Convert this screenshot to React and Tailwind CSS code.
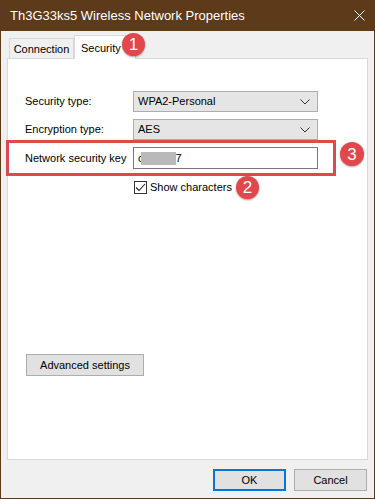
import React from "react";

const font = { fontFamily: '"Liberation Sans", Arial, sans-serif' };

function Chevron() {
  return (
    <svg width="10" height="6" viewBox="0 0 10 6" className="shrink-0">
      <path d="M0.5 0.5 L5 5 L9.5 0.5" fill="none" stroke="#333" strokeWidth="1" />
    </svg>
  );
}

function Select({ value }) {
  return (
    <div className="flex h-[21px] w-[185px] items-center justify-between border border-[#adadad] bg-[#e5e5e5] pl-[4px] pr-[7px] text-black">
      <span>{value}</span>
      <Chevron />
    </div>
  );
}

function Badge({ n, className }) {
  return (
    <div
      className={
        "absolute z-20 flex items-center justify-center rounded-full bg-[#e2474b] text-white text-[17px] leading-none shadow-[0_1px_2px_rgba(0,0,0,0.35)] " +
        className
      }
      style={font}
    >
      {n}
    </div>
  );
}

export default function App() {
  return (
    <div
      className="relative flex h-[499px] w-[375px] flex-col overflow-hidden whitespace-nowrap border-x border-b border-[#5c3a1a] bg-[#f0f0f0] text-[11px]"
      style={font}
    >
      {/* Title bar */}
      <div className="flex h-[31px] shrink-0 items-center justify-between bg-[#5c3a1a] pl-[9px] pr-[9px]">
        <span className="text-[13px] text-white">Th3G33ks5 Wireless Network Properties</span>
        <svg width="11" height="11" viewBox="0 0 11 11">
          <path d="M0.5 0.5 L10.5 10.5 M10.5 0.5 L0.5 10.5" stroke="#fff" strokeWidth="1" />
        </svg>
      </div>

      {/* Tabs */}
      <div className="flex h-[27px] shrink-0 items-end pl-[8px] text-black">
        <div className="flex h-[20px] w-[65px] items-center justify-center border border-b-0 border-[#d9d9d9] bg-[#f0f0f0] pt-[2px]">
          Connection
        </div>
        <div className="relative z-10 mb-[-1px] flex h-[24px] items-start border border-b-0 border-[#d9d9d9] bg-white pl-[6px] pr-[14px] pt-[4px]">
          Security
        </div>
      </div>

      {/* Panel */}
      <div className="mx-[6px] flex h-[402px] shrink-0 flex-col border border-[#d9d9d9] bg-white pl-[17px] text-black">
        <div className="mt-[32px] flex items-center">
          <span className="w-[108px]">Security type:</span>
          <Select value="WPA2-Personal" />
        </div>
        <div className="mt-[7px] flex items-center">
          <span className="w-[108px]">Encryption type:</span>
          <Select value="AES" />
        </div>
        <div className="mt-[7px] flex items-center">
          <span className="w-[108px]">Network security key</span>
          <div className="flex h-[22px] w-[185px] items-center border border-[#7a7a7a] bg-white pl-[4px]">
            <span>c</span>
            <span className="ml-[-3px] inline-block h-[13px] w-[35px] bg-[#b9b9b9]" />
            <span>7</span>
          </div>
        </div>
        <div className="ml-[109px] mt-[12px] flex items-center gap-[3px]">
          <div className="flex h-[13px] w-[13px] items-center justify-center border border-[#333] bg-white">
            <svg width="11" height="9" viewBox="0 0 11 9">
              <path d="M1 4.5 L4 7.5 L10 1" fill="none" stroke="#222" strokeWidth="1.1" />
            </svg>
          </div>
          <span className="leading-none">Show characters</span>
        </div>
        <div className="ml-[1px] mt-[160px] flex h-[22px] w-[118px] items-center justify-center border border-[#adadad] bg-[#e1e1e1]">
          Advanced settings
        </div>
      </div>

      {/* Footer */}
      <div className="flex justify-end gap-[8px] pr-[7px] pt-[9px] text-black">
        <div className="flex h-[22px] w-[73px] items-center justify-center border-2 border-[#0078d7] bg-[#e1e1e1]">
          OK
        </div>
        <div className="flex h-[22px] w-[73px] items-center justify-center border border-[#adadad] bg-[#e1e1e1]">
          Cancel
        </div>
      </div>

      {/* Annotations */}
      <div className="absolute left-[5px] top-[140px] z-20 h-[36px] w-[330px] border-[3px] border-[#e2474b]" />
      <Badge n="1" className="left-[121px] top-[33px] h-[23px] w-[23px]" />
      <Badge n="2" className="left-[235px] top-[176px] h-[23px] w-[23px]" />
      <Badge n="3" className="left-[339px] top-[142px] h-[24px] w-[24px]" />
    </div>
  );
}
